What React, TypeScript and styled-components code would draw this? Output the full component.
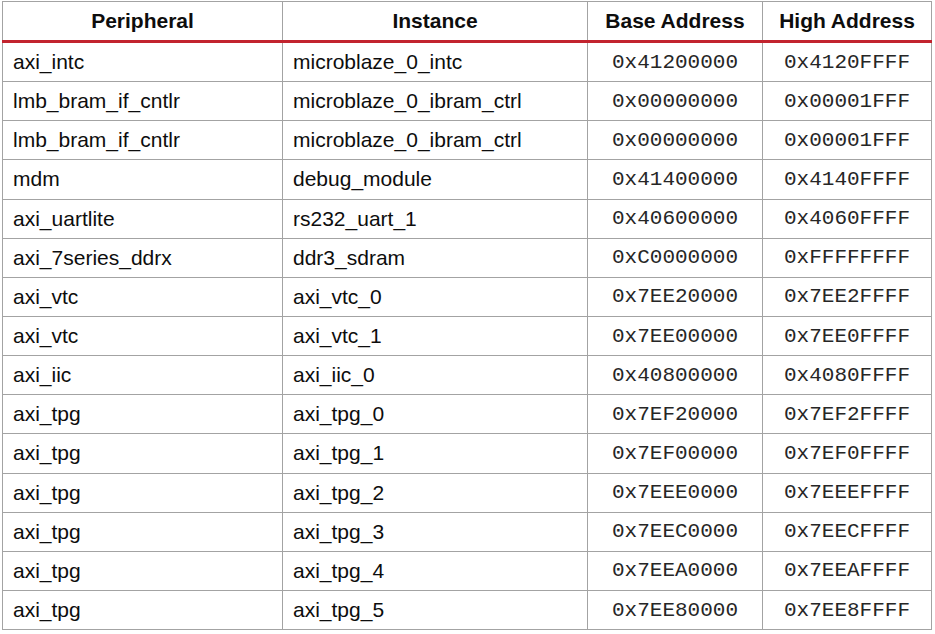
import React from "react";
import styled, { createGlobalStyle } from "styled-components";

const Global = createGlobalStyle`
  html, body { margin: 0; padding: 0; background: #ffffff; }
  body { font-family: "Liberation Sans", Arial, sans-serif; color: #111; }
`;

const Page = styled.div`
  padding: 1px 0 0 2px;
`;

const Table = styled.table`
  border-collapse: collapse;
  table-layout: fixed;
  width: 929px;
  border: 1px solid #a3a3a3;
`;

const HeadCell = styled.th`
  height: 38px;
  padding: 0;
  font-family: "Liberation Sans", Arial, sans-serif;
  font-weight: 700;
  font-size: 21px;
  text-align: center;
  vertical-align: middle;
  color: #0d0d0d;
  border-left: 1px solid #a3a3a3;
  border-right: 1px solid #a3a3a3;
  border-bottom: 3px solid #c2232e;
`;

const Cell = styled.td<{ $mono?: boolean }>`
  height: 38.15px;
  padding: 0 ${(p) => (p.$mono ? "0" : "10px")};
  font-family: ${(p) =>
    p.$mono ? '"Liberation Mono", "Courier New", monospace' : '"Liberation Sans", Arial, sans-serif'};
  font-size: 21px;
  text-align: ${(p) => (p.$mono ? "center" : "left")};
  vertical-align: middle;
  color: ${(p) => (p.$mono ? "#262626" : "#0d0d0d")};
  white-space: nowrap;
  border: 1px solid #a3a3a3;
`;

const rows: [string, string, string, string][] = [
  ["axi_intc", "microblaze_0_intc", "0x41200000", "0x4120FFFF"],
  ["lmb_bram_if_cntlr", "microblaze_0_ibram_ctrl", "0x00000000", "0x00001FFF"],
  ["lmb_bram_if_cntlr", "microblaze_0_ibram_ctrl", "0x00000000", "0x00001FFF"],
  ["mdm", "debug_module", "0x41400000", "0x4140FFFF"],
  ["axi_uartlite", "rs232_uart_1", "0x40600000", "0x4060FFFF"],
  ["axi_7series_ddrx", "ddr3_sdram", "0xC0000000", "0xFFFFFFFF"],
  ["axi_vtc", "axi_vtc_0", "0x7EE20000", "0x7EE2FFFF"],
  ["axi_vtc", "axi_vtc_1", "0x7EE00000", "0x7EE0FFFF"],
  ["axi_iic", "axi_iic_0", "0x40800000", "0x4080FFFF"],
  ["axi_tpg", "axi_tpg_0", "0x7EF20000", "0x7EF2FFFF"],
  ["axi_tpg", "axi_tpg_1", "0x7EF00000", "0x7EF0FFFF"],
  ["axi_tpg", "axi_tpg_2", "0x7EEE0000", "0x7EEEFFFF"],
  ["axi_tpg", "axi_tpg_3", "0x7EEC0000", "0x7EECFFFF"],
  ["axi_tpg", "axi_tpg_4", "0x7EEA0000", "0x7EEAFFFF"],
  ["axi_tpg", "axi_tpg_5", "0x7EE80000", "0x7EE8FFFF"],
];

export default function App() {
  return (
    <Page>
      <Global />
      <Table>
        <colgroup>
          <col style={{ width: 280 }} />
          <col style={{ width: 305 }} />
          <col style={{ width: 175 }} />
          <col style={{ width: 169 }} />
        </colgroup>
        <thead>
          <tr>
            <HeadCell>Peripheral</HeadCell>
            <HeadCell>Instance</HeadCell>
            <HeadCell>Base Address</HeadCell>
            <HeadCell>High Address</HeadCell>
          </tr>
        </thead>
        <tbody>
          {rows.map((r, i) => (
            <tr key={i}>
              <Cell>{r[0]}</Cell>
              <Cell>{r[1]}</Cell>
              <Cell $mono>{r[2]}</Cell>
              <Cell $mono>{r[3]}</Cell>
            </tr>
          ))}
        </tbody>
      </Table>
    </Page>
  );
}
